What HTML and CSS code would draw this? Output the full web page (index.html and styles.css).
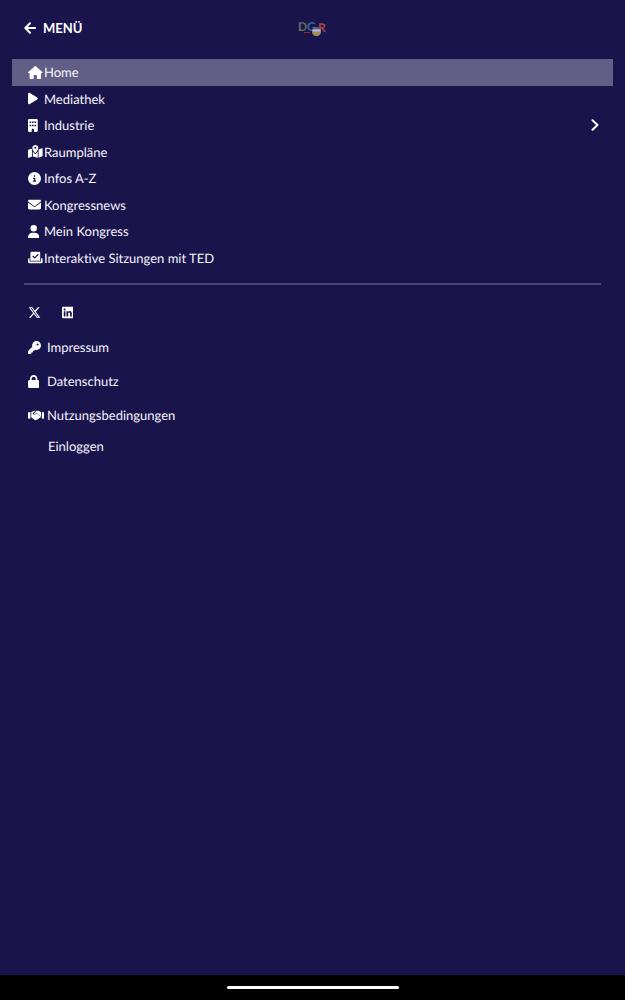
FILE: index.html
```html
<!DOCTYPE html>
<html lang="de">
<head>
    <meta charset="UTF-8">
    <meta name="viewport" content="width=device-width, initial-scale=1.0">
    <title>Menü</title>
    <link rel="stylesheet" href="styles.css">
</head>
<body>
    <header class="topbar">
        <button class="back" type="button">
            <svg class="arrow" viewBox="0 0 12 12"><path d="M11 6H1.5M6 1.3L1.3 6L6 10.7"/></svg>
            <span>MENÜ</span>
        </button>
        <a class="logo" href="#" aria-label="DGR">
            <svg viewBox="0 0 30 24">
                <defs>
                    <linearGradient id="logo-d" x1="0" y1="0" x2="1" y2="1">
                        <stop offset="0" stop-color="#2f66ad"/>
                        <stop offset="0.5" stop-color="#77763f"/>
                        <stop offset="1" stop-color="#2d6268"/>
                    </linearGradient>
                    <linearGradient id="logo-r" x1="0" y1="0" x2="1" y2="1">
                        <stop offset="0" stop-color="#a93a50"/>
                        <stop offset="0.5" stop-color="#a8503d"/>
                        <stop offset="1" stop-color="#a02945"/>
                    </linearGradient>
                </defs>
                <text x="0" y="15" fill="url(#logo-d)">D</text>
                <text x="9" y="15" fill="#386c92">G</text>
                <text x="20" y="16" fill="url(#logo-r)">R</text>
                <path d="M6 16.500h6" stroke="#8d2d3e"/>
                <circle cx="18.500" cy="15.500" r="4.500" fill="#5c6090"/>
                <path d="M14 15.500a4.500 4.500 0 0 0 9 0z" fill="#a28b54"/>
                <path d="M14.500 14.500h8" stroke="#c2c2d2" stroke-width="2"/>
            </svg>
        </a>
    </header>

    <main>
        <nav>
            <ul class="menu">
                <li><a class="active" href="#">
                    <span class="icon"><svg viewBox="0 0 576 512"><path d="M575.8 255.500c0 18-15 32.100-32 32.100h-32l.7 160.200c0 2.700-.2 5.400-.5 8.100V472c0 22.100-17.900 40-40 40H392c-22.100 0-40-17.900-40-40V384c0-17.700-14.300-32-32-32H256c-17.700 0-32 14.300-32 32v88c0 22.100-17.900 40-40 40H104c-22.100 0-40-17.900-40-40V287.600H32c-18 0-32-14-32-32.100c0-9 3-17 10-24L266.400 8c7-7 15-8 22-8s15 2 21 7L564.800 231.500c8 7 12 15 11 24z"/></svg></span>Home</a></li>
                <li><a href="#">
                    <span class="icon"><svg viewBox="0 0 384 512"><path d="M73 39c-14.800-9.100-33.400-9.400-48.500-.9S0 62.600 0 80V432c0 17.400 9.400 33.400 24.500 41.900s33.700 8.100 48.500-.9L361 297c14.300-8.700 23-24.200 23-41s-8.700-32.200-23-41L73 39z"/></svg></span>Mediathek</a></li>
                <li><a href="#">
                    <span class="icon"><svg viewBox="0 0 384 512"><path fill-rule="evenodd" d="M48 0C21.500 0 0 21.500 0 48V464c0 26.500 21.500 48 48 48h96V432c0-26.500 21.500-48 48-48s48 21.500 48 48v80h96c26.500 0 48-21.500 48-48V48c0-26.500-21.500-48-48-48H48zM64 96h64v64H64zM160 96h64v64h-64zM256 96h64v64h-64zM64 224h64v64H64zM160 224h64v64h-64zM256 224h64v64h-64z"/></svg></span>Industrie
                    <svg class="chevron" viewBox="0 0 8 12"><path d="M1.500 1.200L6.500 6L1.500 10.800"/></svg></a></li>
                <li><a href="#">
                    <span class="icon"><svg viewBox="0 0 576 512"><path d="M408 120c0 54.600-73.100 151.900-105.200 192c-7.700 9.600-22 9.600-29.600 0C241.100 271.900 168 174.600 168 120C168 53.700 221.700 0 288 0s120 53.700 120 120zm8 80.400c3.500-6.900 6.700-13.800 9.600-20.600c.5-1.200 1-2.500 1.500-3.700l116-46.400C558.900 123.400 576 135 576 152V422.800c0 9.800-6 18.600-15.100 22.300L416 503V200.400zM137.600 138.300c2.400 14.100 7.200 28.300 12.800 41.500c2.900 6.800 6.100 13.700 9.600 20.600V451.800L32.900 502.700C17.100 509 0 497.400 0 480.400V209.600c0-9.800 6-18.600 15.100-22.300l122.600-49zM327.800 332c13.900-17.400 35.700-45.700 56.200-77V504.300L192 449.400V255c20.500 31.300 42.300 59.600 56.200 77c20.500 25.600 59.100 25.600 79.600 0zM288 152a40 40 0 1 0 0-80 40 40 0 1 0 0 80z"/></svg></span>Raumpläne</a></li>
                <li><a href="#">
                    <span class="icon"><svg viewBox="0 0 512 512"><path d="M256 512A256 256 0 1 0 256 0a256 256 0 1 0 0 512zM216 336h24V272H216c-13.300 0-24-10.700-24-24s10.700-24 24-24h48c13.300 0 24 10.700 24 24v88h8c13.300 0 24 10.700 24 24s-10.700 24-24 24H216c-13.300 0-24-10.700-24-24s10.700-24 24-24zm40-208a32 32 0 1 1 0 64 32 32 0 1 1 0-64z"/></svg></span>Infos A-Z</a></li>
                <li><a href="#">
                    <span class="icon"><svg viewBox="0 0 512 512"><path d="M48 64C21.500 64 0 85.500 0 112c0 15.100 7.100 29.300 19.200 38.400L236.800 313.600c11.400 8.500 27 8.500 38.400 0L492.800 150.400c12.100-9.100 19.200-23.300 19.200-38.400c0-26.500-21.500-48-48-48H48zM0 176V384c0 35.300 28.700 64 64 64H448c35.300 0 64-28.700 64-64V176L294.400 339.200c-22.800 17.100-54 17.100-76.800 0L0 176z"/></svg></span>Kongressnews</a></li>
                <li><a href="#">
                    <span class="icon"><svg viewBox="0 0 448 512"><path d="M224 256A128 128 0 1 0 224 0a128 128 0 1 0 0 256zm-45.700 48C79.800 304 0 383.800 0 482.300C0 498.700 13.300 512 29.700 512H418.300c16.400 0 29.700-13.300 29.700-29.700C448 383.800 368.200 304 269.700 304H178.300z"/></svg></span>Mein Kongress</a></li>
                <li><a href="#">
                    <span class="icon"><svg viewBox="0 0 576 512"><path d="M96 80c0-26.500 21.500-48 48-48H432c26.500 0 48 21.500 48 48V384H96V80zm313 47c-9.400-9.400-24.600-9.400-33.900 0l-111 111-47-47c-9.400-9.400-24.600-9.400-33.900 0s-9.400 24.600 0 33.900l64 64c9.400 9.400 24.600 9.400 33.900 0L409 161c9.400-9.400 9.400-24.600 0-33.900zM0 336c0-26.500 21.500-48 48-48H64V416H512V288h16c26.500 0 48 21.500 48 48v96c0 26.500-21.500 48-48 48H48c-26.500 0-48-21.500-48-48V336z"/></svg></span>Interaktive Sitzungen mit TED</a></li>
            </ul>
        </nav>

        <hr>

        <div class="social">
            <a href="#" aria-label="X"><svg viewBox="0 0 512 512"><path d="M389.200 48h70.600L305.600 224.200 487 464H345L233.700 318.600 106.500 464H35.800L200.700 275.500 26.800 48H172.400L272.900 180.900 389.200 48zM364.400 421.800h39.100L151.100 88h-42L364.400 421.800z"/></svg></a>
            <a href="#" aria-label="LinkedIn"><svg viewBox="0 0 448 512"><path d="M416 32H31.900C14.300 32 0 46.500 0 64.300v383.400C0 465.500 14.300 480 31.900 480H416c17.600 0 32-14.500 32-32.300V64.300c0-17.800-14.400-32.300-32-32.300zM135.400 416H69V202.200h66.500V416zm-33.200-243c-21.300 0-38.500-17.300-38.500-38.500S80.900 96 102.200 96c21.200 0 38.500 17.300 38.500 38.500 0 21.300-17.200 38.500-38.500 38.500zm282.100 243h-66.400V312c0-24.800-.5-56.700-34.500-56.700-34.600 0-39.900 27-39.900 54.900V416h-66.400V202.200h63.700v29.200h.9c8.900-16.800 30.600-34.500 62.900-34.500 67.200 0 79.700 44.300 79.700 101.900V416z"/></svg></a>
        </div>

        <ul class="legal">
            <li><a href="#">
                <span class="icon"><svg viewBox="0 0 512 512"><path d="M336 352c97.200 0 176-78.800 176-176S433.200 0 336 0S160 78.800 160 176c0 18.700 2.900 36.800 8.300 53.700L7 391c-4.500 4.500-7 10.600-7 17v80c0 13.300 10.700 24 24 24h80c13.300 0 24-10.700 24-24V448h40c13.300 0 24-10.700 24-24V384h40c6.400 0 12.500-2.500 17-7l33.300-33.300c16.900 5.400 35 8.300 53.700 8.300zM376 96a40 40 0 1 1 0 80 40 40 0 1 1 0-80z"/></svg></span>Impressum</a></li>
            <li><a href="#">
                <span class="icon"><svg viewBox="0 0 448 512"><path d="M144 144v48H304V144c0-44.200-35.800-80-80-80s-80 35.800-80 80zM80 192V144C80 64.500 144.500 0 224 0s144 64.500 144 144v48h16c35.300 0 64 28.700 64 64V448c0 35.300-28.700 64-64 64H64c-35.300 0-64-28.700-64-64V256c0-35.300 28.700-64 64-64H80z"/></svg></span>Datenschutz</a></li>
            <li><a href="#">
                <span class="icon"><svg viewBox="0 0 640 512"><path d="M0 128h96v224c0 18-14 32-32 32H32c-18 0-32-14-32-32zM544 128h96v224c0 18-14 32-32 32h-32c-18 0-32-14-32-32zM128 128l80-48c20-12 38-16 60-16h30l-90 80c-22 20-24 54-4 76s55 24 78 4l62-54 132 120c16 14 18 38 4 54s-34 16-48 8c4 24-14 44-38 42-8 24-38 34-60 18-12 28-46 40-72 20L142 336h-14zM326 80c10-10 26-16 42-16h12c22 0 42 6 60 18l72 46v208h-12c6-22-2-46-20-62L344 146l-94 82c-10 8-24 8-32-2s-8-24 2-32z"/></svg></span>Nutzungsbedingungen</a></li>
        </ul>
        <a class="login" href="#">Einloggen</a>
    </main>

    <footer class="system-bar"><div class="handle"></div></footer>
</body>
</html>
```
FILE: styles.css
```css
* {
    box-sizing: border-box;
}
body {
    margin: 0;
    min-height: 100vh;
    display: flex;
    flex-direction: column;
    background: #1a144d;
    color: #f4f3fa;
    font-family: Lato, sans-serif;
    font-size: 13px;
    line-height: 20px;
    font-variant-ligatures: none;
    text-rendering: geometricPrecision;
}
a {
    color: inherit;
    text-decoration: none;
}
ul {
    list-style: none;
    margin: 0;
    padding: 0;
}
svg {
    display: block;
    fill: #fff;
}
.topbar {
    display: grid;
    grid-template-columns: 1fr auto 1fr;
    align-items: center;
    height: 56px;
    padding: 0 24px;
}
.back {
    display: flex;
    align-items: center;
    gap: 7px;
    justify-self: start;
    padding: 0;
    border: 0;
    background: none;
    color: #fff;
    font: bold 13px/20px Lato, sans-serif;
    cursor: pointer;
}
.arrow, .chevron {
    height: 12px;
    fill: none;
    stroke: #fff;
    stroke-width: 2;
    stroke-linecap: round;
    stroke-linejoin: round;
}
.logo svg {
    width: 30px;
    height: 24px;
    overflow: visible;
    font: bold 12px Lato, sans-serif;
}
main {
    flex: 1;
    padding: 3px 12px 0;
}
/* rows share the list height evenly */
.menu {
    display: grid;
    grid-auto-rows: 1fr;
    height: 212px;
}
.menu a {
    display: flex;
    align-items: center;
    height: 100%;
    padding: 0 14px 0 16px;
}
.menu .active {
    background: #625e86;
}
.icon {
    flex: none;
    width: 16px;
}
.icon svg, .social svg {
    height: 13px;
}
.chevron {
    margin-left: auto;
}
hr {
    height: 2px;
    margin: 12px 12px 0;
    border: 0;
    background: #4b4676;
}
.social {
    display: flex;
    gap: 21px;
    padding: 21px 16px 0;
}
.legal {
    display: grid;
    gap: 14px;
    padding: 18px 16px 0;
}
.legal a {
    display: flex;
    align-items: center;
    gap: 3px;
}
.login {
    display: inline-block;
    margin: 11px 0 0 36px;
}
.system-bar {
    display: flex;
    justify-content: center;
    align-items: center;
    height: 25px;
    background: #000;
}
.handle {
    width: 172px;
    height: 3px;
    border-radius: 2px;
    background: #fff;
}
```
